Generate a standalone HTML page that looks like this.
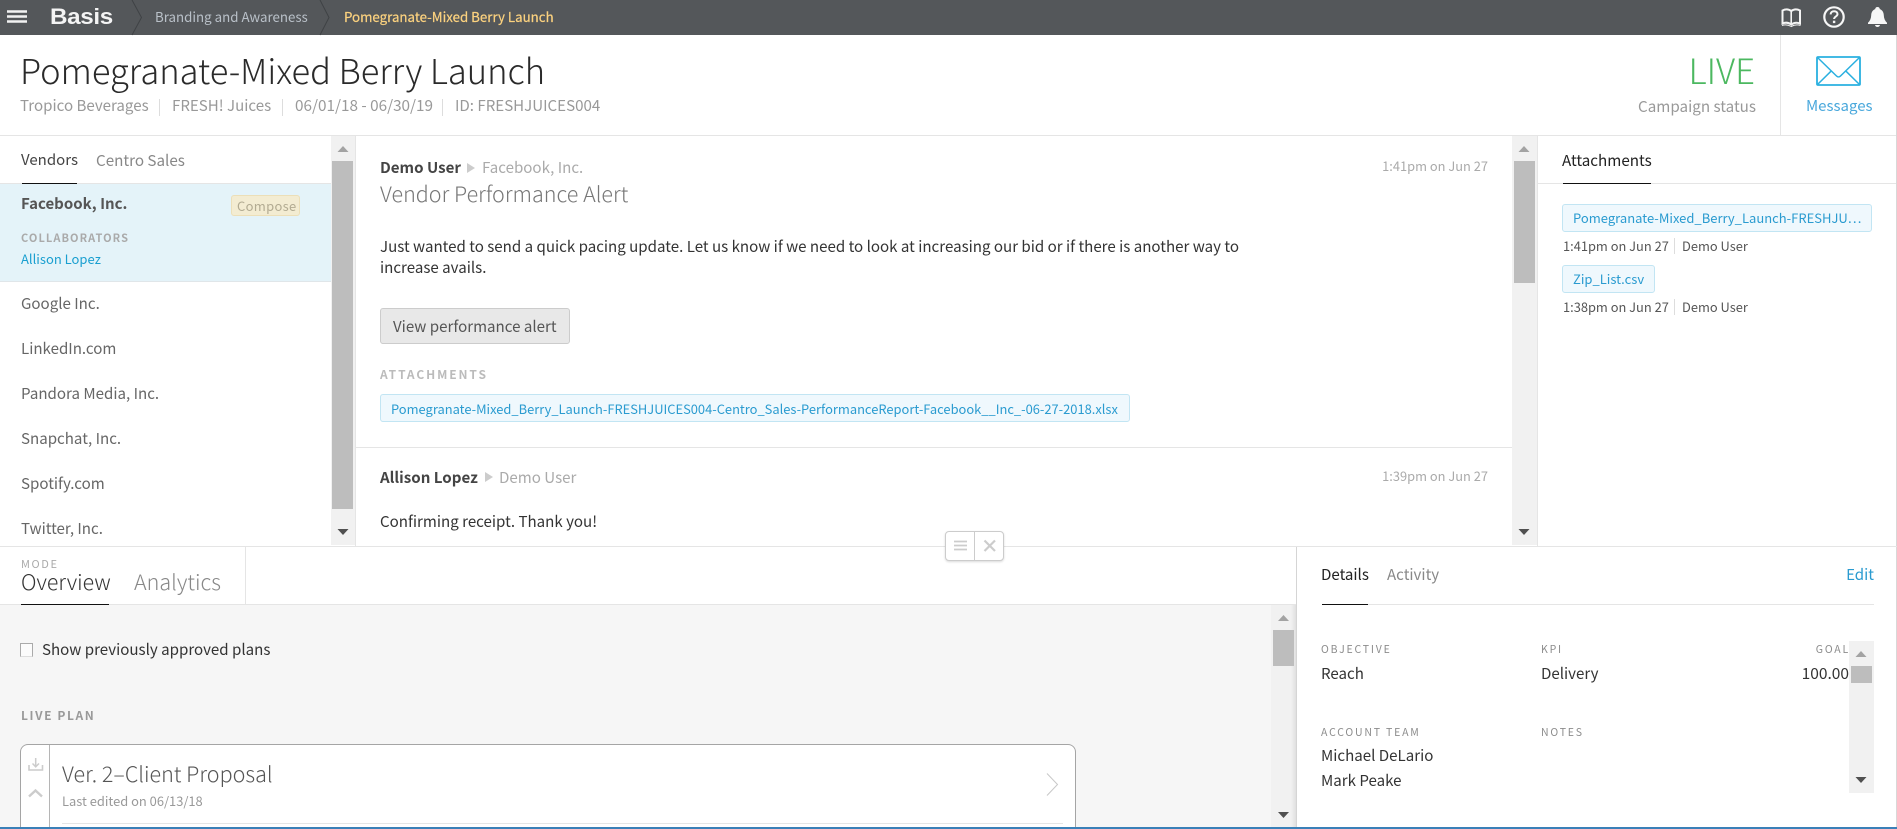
<!DOCTYPE html>
<html lang="en"><head><meta charset="utf-8"><title>Pomegranate-Mixed Berry Launch</title>
<style>
html,body{margin:0;padding:0;width:1897px;height:829px;overflow:hidden;background:#fff}
body{position:relative;font-family:"Noto Sans CJK JP","Liberation Sans",sans-serif;font-size:15.1px;color:#333}
.t{position:absolute;white-space:nowrap;line-height:20px;height:20px}
.r{position:absolute}
.l{font-weight:300}
.b{font-weight:700}
.cap{font-size:10.5px;letter-spacing:1.800px;color:#8c8c8c}
.g{color:#999}
.chip{position:absolute;height:26px;background:#eff8fd;border:1px solid #c2e5f3;border-radius:3px}
.lnk{color:#2a9bd0;font-size:12.900px}
svg{position:absolute;overflow:visible}
</style></head><body>

<!-- top bar -->
<div class="r" style="left:0;top:0;width:1897px;height:35px;background:#54575a"></div>
<svg style="left:0;top:0" width="350" height="35"><path d="M132 0L141.500 17.500L132 35" fill="none" stroke="#3f4245" stroke-width="1"/><path d="M320 0L329 17.500L320 35" fill="none" stroke="#3f4245" stroke-width="1"/><path d="M7 11.500H27M7 16.500H27M7 21.500H27" stroke="#f2f2f2" stroke-width="2.600"/></svg>
<div class="t" style="left:50px;top:6px;font-family:'Liberation Sans',sans-serif;font-weight:700;font-size:22px;line-height:22px;height:22px;color:#f4f4f4;transform:scaleX(1.100);transform-origin:0 0;letter-spacing:-.3px">Basis</div>
<div class="t" style="left:155px;top:7px;font-size:13.300px;color:#b9c0c8">Branding and Awareness</div>
<div class="t" style="left:344px;top:7px;font-size:13.300px;color:#fcd27f;-webkit-text-stroke:.2px #fcd27f">Pomegranate-Mixed Berry Launch</div>
<svg style="left:1781px;top:7px" width="21" height="21" viewBox="0 0 21 21"><path d="M1.500 3.500C4.500 2 7.500 2 10.200 4C13 2 16 2 19 3.500V16.500C16 15.200 13 15.500 10.200 17.500C7.500 15.500 4.500 15.200 1.500 16.500Z" fill="none" stroke="#f4f4f4" stroke-width="2"/><path d="M10.200 4V18" stroke="#f4f4f4" stroke-width="1.600"/><path d="M1 18.500C4 17.500 7.500 18 10.200 19.500C13 18 16.500 17.500 19.500 18.500" fill="none" stroke="#f4f4f4" stroke-width="1"/></svg>
<svg style="left:1823px;top:6px" width="22" height="22" viewBox="0 0 22 22"><circle cx="11" cy="11" r="9.700" fill="none" stroke="#f6f6f6" stroke-width="2.200"/><path d="M7.600 8.400C7.700 6.300 9.200 5.200 11.100 5.200C13.100 5.200 14.500 6.400 14.500 8.100C14.500 10.400 11.100 10.600 11.100 13" fill="none" stroke="#f6f6f6" stroke-width="2"/><rect x="9.900" y="14.700" width="2.400" height="2.400" fill="#f6f6f6"/></svg>
<svg style="left:1867px;top:6px" width="21" height="21" viewBox="0 0 21 21"><path d="M10.500 1C12 1 12.700 2 12.800 3.100C15.500 4 16.700 6.400 16.800 9.300C16.900 12.500 18 15 20 16.800V18H1V16.800C3 15 4.100 12.500 4.200 9.300C4.300 6.400 5.500 4 8.200 3.100C8.300 2 9 1 10.500 1Z" fill="#f6f6f6"/><path d="M8 19H13C12.700 20.300 11.700 21 10.500 21C9.300 21 8.300 20.300 8 19Z" fill="#f6f6f6"/></svg>

<!-- header -->
<div class="t l" style="left:20px;top:46px;font-size:34.500px;line-height:46px;height:46px;color:#2a2a2a">Pomegranate-Mixed Berry Launch</div>
<div class="t g" style="left:20px;top:95px;font-size:15.100px">Tropico Beverages</div>
<div class="r" style="left:159px;top:99px;width:1px;height:17px;background:#ddd"></div>
<div class="t g" style="left:172px;top:95px;font-size:15.100px">FRESH! Juices</div>
<div class="r" style="left:282px;top:99px;width:1px;height:17px;background:#ddd"></div>
<div class="t g" style="left:295px;top:95px;font-size:15.300px">06/01/18 - 06/30/19</div>
<div class="r" style="left:442px;top:99px;width:1px;height:17px;background:#ddd"></div>
<div class="t g" style="left:455px;top:95px;font-size:15.100px">ID: FRESHJUICES004</div>
<div class="t l" style="right:142px;top:46px;font-size:34.700px;line-height:46px;height:46px;color:#4cb860">LIVE</div>
<div class="t g" style="right:141px;top:96px;font-size:15.200px">Campaign status</div>
<div class="r" style="left:1780px;top:35px;width:1px;height:100px;background:#e5e5e5"></div>
<svg style="left:1816px;top:56px" width="45" height="30" viewBox="0 0 45 30"><rect x="1" y="1" width="43" height="28" rx="1" fill="none" stroke="#2ab0e0" stroke-width="1.800"/><path d="M1.500 1.500L20.500 20C21.700 21.200 23.300 21.200 24.500 20L43.500 1.500M1.500 28.500L15 15.200M43.500 28.500L30 15.200" fill="none" stroke="#2ab0e0" stroke-width="1.500"/></svg>
<div class="t" style="left:1806px;top:96px;font-size:15px;color:#4aa8dc">Messages</div>
<div class="r" style="left:0;top:135px;width:1897px;height:1px;background:#e5e5e5"></div>

<!-- vendors column -->
<div class="t" style="left:21px;top:150px;font-size:15px;color:#444">Vendors</div>
<div class="t" style="left:96px;top:150px;font-size:15.200px;color:#888">Centro Sales</div>
<div class="r" style="left:0;top:183px;width:331px;height:1px;background:#e5e5e5"></div>
<div class="r" style="left:22px;top:183px;width:55px;height:1px;background:#111"></div>
<div class="r" style="left:0;top:184px;width:331px;height:97px;background:#e4f3f9;border-bottom:1px solid #e0e6e9"></div>
<div class="t b" style="left:21px;top:194px;font-size:15px;color:#555">Facebook, Inc.</div>
<div class="r" style="left:231px;top:195px;width:67px;height:19px;background:#f3ecd2;border:1px solid #ecdfb8;border-radius:3px"></div>
<div class="t" style="left:237px;top:196px;font-size:13px;letter-spacing:.3px;color:#b2ab92">Compose</div>
<div class="t b" style="left:21px;top:228px;font-size:11px;letter-spacing:1.100px;color:#aaa">COLLABORATORS</div>
<div class="t" style="left:21px;top:249px;font-size:13px;color:#1a9fd0">Allison Lopez</div>
<div class="t" style="left:21px;top:293px;color:#666">Google Inc.</div>
<div class="t" style="left:21px;top:338px;color:#666">LinkedIn.com</div>
<div class="t" style="left:21px;top:383px;color:#666">Pandora Media, Inc.</div>
<div class="t" style="left:21px;top:428px;color:#666">Snapchat, Inc.</div>
<div class="t" style="left:21px;top:473px;color:#666">Spotify.com</div>
<div class="t" style="left:21px;top:518px;color:#666">Twitter, Inc.</div>
<!-- vendors scrollbar -->
<div class="r" style="left:331px;top:136px;width:24px;height:409px;background:#f1f1f1"></div>
<div class="r" style="left:332px;top:161px;width:21px;height:348px;background:#bdbdbd"></div>
<div class="r" style="left:355px;top:136px;width:1px;height:410px;background:#e5e5e5"></div>
<svg style="left:331px;top:136px" width="24" height="409"><path d="M6.500 16L12 10L17.500 16Z" fill="#a3a3a3"/><path d="M6.500 393L12 399L17.500 393Z" fill="#505050"/></svg>

<!-- messages column -->
<div class="t b" style="left:380px;top:157px;color:#444">Demo User</div>
<svg style="left:467px;top:162px" width="9" height="12"><path d="M0 1L8 6L0 11Z" fill="#ccc"/></svg>
<div class="t" style="left:482px;top:157px;color:#aaa">Facebook, Inc.</div>
<div class="t" style="right:409px;top:156px;font-size:12.850px;color:#aaa">1:41pm on Jun 27</div>
<div class="t l" style="left:380px;top:180px;font-size:21.500px;line-height:28px;height:28px;color:#777">Vendor Performance Alert</div>
<div class="t" style="left:380px;top:236px;color:#333">Just wanted to send a quick pacing update. Let us know if we need to look at increasing our bid or if there is another way to</div>
<div class="t" style="left:380px;top:257px;color:#333">increase avails.</div>
<div class="r" style="left:380px;top:308px;width:188px;height:34px;background:#e8e8e8;border:1px solid #ccc;border-radius:3px"></div>
<div class="t" style="left:393px;top:316px;color:#555">View performance alert</div>
<div class="t b" style="left:380px;top:365px;font-size:12px;letter-spacing:1.900px;color:#bbb">ATTACHMENTS</div>
<div class="chip" style="left:380px;top:394px;width:748px"></div>
<div class="t lnk" style="left:391px;top:399px">Pomegranate-Mixed_Berry_Launch-FRESHJUICES004-Centro_Sales-PerformanceReport-Facebook__Inc_-06-27-2018.xlsx</div>
<div class="r" style="left:356px;top:447px;width:1156px;height:1px;background:#e5e5e5"></div>
<div class="t b" style="left:380px;top:467px;color:#444">Allison Lopez</div>
<svg style="left:485px;top:471px" width="9" height="12"><path d="M0 1L8 6L0 11Z" fill="#ccc"/></svg>
<div class="t" style="left:499px;top:467px;color:#aaa">Demo User</div>
<div class="t" style="right:409px;top:466px;font-size:12.850px;color:#aaa">1:39pm on Jun 27</div>
<div class="t" style="left:380px;top:511px;color:#333">Confirming receipt. Thank you!</div>
<!-- messages scrollbar -->
<div class="r" style="left:1512px;top:136px;width:25px;height:409px;background:#f1f1f1"></div>
<div class="r" style="left:1514px;top:161px;width:21px;height:122px;background:#bdbdbd"></div>
<div class="r" style="left:1537px;top:136px;width:1px;height:410px;background:#e5e5e5"></div>
<svg style="left:1512px;top:136px" width="25" height="409"><path d="M6.500 16L12 10L17.500 16Z" fill="#a3a3a3"/><path d="M6.500 393L12 399L17.500 393Z" fill="#505050"/></svg>

<!-- attachments column -->
<div class="t" style="left:1562px;top:150px;font-size:15.200px;color:#222">Attachments</div>
<div class="r" style="left:1538px;top:183px;width:359px;height:1px;background:#e5e5e5"></div>
<div class="r" style="left:1563px;top:183px;width:88px;height:1px;background:#111"></div>
<div class="chip" style="left:1562px;top:204px;width:308px"></div>
<div class="t lnk" style="left:1573px;top:208px;font-size:13px">Pomegranate-Mixed_Berry_Launch-FRESHJU…</div>
<div class="t" style="left:1563px;top:236px;font-size:12.850px;color:#555">1:41pm on Jun 27</div>
<div class="r" style="left:1674px;top:238px;width:1px;height:16px;background:#ddd"></div>
<div class="t" style="left:1682px;top:236px;font-size:12.850px;color:#555">Demo User</div>
<div class="chip" style="left:1562px;top:265px;width:91px"></div>
<div class="t lnk" style="left:1573px;top:269px;font-size:13px">Zip_List.csv</div>
<div class="t" style="left:1563px;top:297px;font-size:12.850px;color:#555">1:38pm on Jun 27</div>
<div class="r" style="left:1674px;top:299px;width:1px;height:16px;background:#ddd"></div>
<div class="t" style="left:1682px;top:297px;font-size:12.850px;color:#555">Demo User</div>
<div class="r" style="left:1896px;top:35px;width:1px;height:794px;background:#d8d8d8"></div>

<!-- divider -->
<div class="r" style="left:0;top:546px;width:1897px;height:1px;background:#e5e5e5"></div>
<div class="r" style="left:945px;top:531px;width:57px;height:28px;background:#fff;border:1px solid #ccc;border-radius:4px;box-shadow:0 1px 2px rgba(0,0,0,.15)"></div>
<div class="r" style="left:974px;top:532px;width:1px;height:28px;background:#ccc"></div>
<svg style="left:954px;top:540px" width="42" height="12"><path d="M0 1.500H13M0 5.500H13M0 9.500H13" stroke="#ccc" stroke-width="1.800"/><path d="M30.500 .5L41 11M41 .5L30.500 11" stroke="#ccc" stroke-width="2.200"/></svg>

<!-- bottom left -->
<div class="r" style="left:0;top:605px;width:1297px;height:222px;background:#f6f6f6"></div>
<div class="r" style="left:0;top:604px;width:1297px;height:1px;background:#e5e5e5"></div>
<div class="r" style="left:245px;top:547px;width:1px;height:57px;background:#e5e5e5"></div>
<div class="t" style="left:21px;top:554px;font-size:11px;letter-spacing:1.600px;color:#aaa">MODE</div>
<div class="t l" style="left:21px;top:567px;font-size:21.300px;line-height:30px;height:30px;color:#333">Overview</div>
<div class="t l" style="left:134px;top:567px;font-size:21.500px;line-height:30px;height:30px;color:#888">Analytics</div>
<div class="r" style="left:21px;top:604px;width:88px;height:1px;background:#111"></div>
<div class="r" style="left:20px;top:643px;width:11px;height:12px;border:1px solid #aaa;border-bottom-color:#ddd;background:#fbfbfb"></div>
<div class="t" style="left:42px;top:639px;color:#333">Show previously approved plans</div>
<div class="t b" style="left:21px;top:706px;font-size:12px;letter-spacing:1.600px;color:#999">LIVE PLAN</div>
<div class="r" style="left:20px;top:744px;width:1054px;height:90px;background:#fff;border:1px solid #a5a5a5;border-radius:8px 8px 0 0;box-sizing:content-box"></div>
<div class="r" style="left:49px;top:745px;width:1px;height:84px;background:#b5b5b5"></div>
<svg style="left:28px;top:757px" width="16" height="42"><path d="M1 8V13H14.500V8" fill="none" stroke="#ccc" stroke-width="1.600"/><path d="M7.700 1V9.500M4.500 6.500L7.700 9.800L11 6.500" fill="none" stroke="#ccc" stroke-width="1.500"/><path d="M1 39.500L7.500 33.500L14 39.500" fill="none" stroke="#ccc" stroke-width="2.400"/></svg>
<div class="t l" style="left:62px;top:759px;font-size:21.500px;line-height:30px;height:30px;color:#555">Ver. 2–Client Proposal</div>
<div class="t" style="left:62px;top:791px;font-size:12.900px;color:#999">Last edited on 06/13/18</div>
<svg style="left:1046px;top:773px" width="13" height="23"><path d="M1 .5L11.500 11.500L1 22.500" fill="none" stroke="#c8c8c8" stroke-width="1"/></svg>
<div class="r" style="left:62px;top:823px;width:1001px;height:1px;background:#e5e5e5"></div>
<!-- bottom scrollbar -->
<div class="r" style="left:1271px;top:605px;width:20px;height:222px;background:#f1f1f1"></div>
<div class="r" style="left:1291px;top:605px;width:6px;height:222px;background:linear-gradient(90deg,#f1f1f1,#dcdcdc)"></div>
<div class="r" style="left:1273px;top:630px;width:21px;height:36px;background:#bdbdbd"></div>
<svg style="left:1271px;top:605px" width="25" height="222"><path d="M7 16L12.500 10L18 16Z" fill="#a3a3a3"/><path d="M7 207L12.500 213L18 207Z" fill="#505050"/></svg>

<!-- details -->
<div class="r" style="left:1296px;top:547px;width:1px;height:280px;background:#d5d5d5"></div>
<div class="r" style="left:1297px;top:547px;width:599px;height:280px;background:#fff"></div>
<div class="t" style="left:1321px;top:564px;font-size:15.100px;color:#222">Details</div>
<div class="t" style="left:1387px;top:564px;font-size:15.100px;color:#888">Activity</div>
<div class="t" style="right:23px;top:564px;font-size:15.100px;color:#2a9bd0">Edit</div>
<div class="r" style="left:1322px;top:604px;width:552px;height:1px;background:#e5e5e5"></div>
<div class="r" style="left:1322px;top:604px;width:46px;height:1px;background:#111"></div>
<div class="t cap" style="left:1321px;top:640px">OBJECTIVE</div>
<div class="t cap" style="left:1541px;top:640px">KPI</div>
<div class="t cap" style="right:47px;top:640px">GOAL</div>
<div class="t" style="left:1321px;top:663px;color:#333">Reach</div>
<div class="t" style="left:1541px;top:663px;color:#333">Delivery</div>
<div class="t" style="right:48px;top:663px;font-size:15.500px;color:#333">100.00</div>
<div class="t cap" style="left:1321px;top:723px">ACCOUNT TEAM</div>
<div class="t cap" style="left:1541px;top:723px">NOTES</div>
<div class="t" style="left:1321px;top:745px;color:#333">Michael DeLario</div>
<div class="t" style="left:1321px;top:770px;color:#333">Mark Peake</div>
<div class="r" style="left:1849px;top:641px;width:25px;height:152px;background:#f1f1f1"></div>
<div class="r" style="left:1851px;top:666px;width:21px;height:17px;background:#bdbdbd"></div>
<svg style="left:1849px;top:641px" width="25" height="152"><path d="M6.500 16L12 10L17.500 16Z" fill="#a3a3a3"/><path d="M6.500 136L12 142L17.500 136Z" fill="#505050"/></svg>

<!-- bottom line -->
<div class="r" style="left:0;top:827px;width:1897px;height:2px;background:#3a80b8"></div>
</body></html>
